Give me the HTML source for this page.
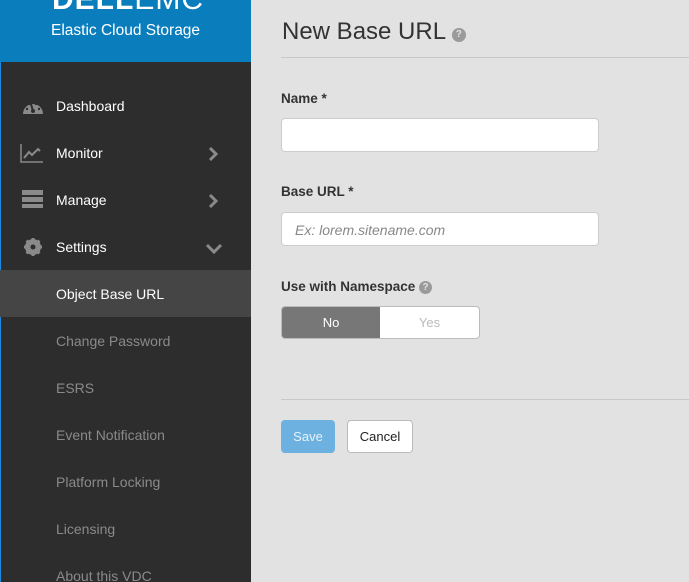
<!DOCTYPE html>
<html><head><style>
*{box-sizing:border-box;margin:0;padding:0}
html,body{width:689px;height:582px;overflow:hidden}
body{background:#e2e2e2;font-family:"Liberation Sans",Arial,sans-serif;position:relative}
#sb{position:absolute;left:0;top:0;width:251px;height:582px;background:#2d2d2d;border-left:1px solid #1e88e5}
#hd{position:absolute;left:-1px;top:0;width:251px;height:62px;background:#0a7dbd;color:#fff}
.logo{position:absolute;left:52px;top:-17px;font-size:30px;letter-spacing:1px;font-weight:bold}
.logo span{font-weight:normal}
.sub{position:absolute;left:51px;top:22px;font-size:15.5px}
.it{position:absolute;left:-1px;width:251px;height:47px;font-size:14px;line-height:47px;padding-left:56px;color:#fff}
.sub2{color:#8a8a8a}
.act{background:#454545}
.ic{position:absolute;left:22px;top:15px}
.ch{position:absolute;left:207px;top:16px}
.m{position:absolute;color:#333}
.lab{font-weight:bold;font-size:13.5px;left:281px}
.inp{position:absolute;left:281px;width:318px;height:34px;background:#fff;border:1px solid #ccc;border-radius:4px}
.q{display:inline-block;width:13px;height:13px;border-radius:50%;background:#9a9a9a;color:#e2e2e2;font-size:10px;line-height:13px;text-align:center;font-weight:bold;vertical-align:1px}
hr{position:absolute;left:281px;width:408px;border:0;border-top:1px solid #c8c8c8}
</style></head><body>
<div id="sb">
<div id="hd"><div class="logo">DELL<span>EMC</span></div><div class="sub">Elastic Cloud Storage</div></div>
<div class="it" style="top:83px"><svg class="ic" width="22" height="18" viewBox="0 0 22 18"><path d="M1 16A10 10 0 0 1 21 16Z" fill="#8a8a8a"/><circle cx="11" cy="13" r="2" fill="#2d2d2d"/><path d="M11 13L9 6" stroke="#2d2d2d" stroke-width="2"/><circle cx="5" cy="11" r="1.2" fill="#2d2d2d"/><circle cx="17" cy="11" r="1.2" fill="#2d2d2d"/><circle cx="8" cy="6" r="1.2" fill="#2d2d2d"/><circle cx="14" cy="6" r="1.2" fill="#2d2d2d"/></svg>Dashboard</div>
<div class="it" style="top:130px"><svg class="ic" width="24" height="20" viewBox="0 0 24 20" style="left:20px;top:13px"><path d="M1 1V19H23" stroke="#8a8a8a" stroke-width="1.5" fill="none"/><path d="M4 15L9 9L12 12L18 6L20 8" stroke="#8a8a8a" stroke-width="2" fill="none"/></svg>Monitor<svg class="ch" width="12" height="16"><path d="M3 2L9 8L3 14" stroke="#8a8a8a" stroke-width="3" fill="none"/></svg></div>
<div class="it" style="top:177px"><svg class="ic" width="22" height="18" style="top:13px"><rect x="0" y="0" width="21" height="5" fill="#8a8a8a"/><rect x="0" y="7" width="21" height="5" fill="#8a8a8a"/><rect x="0" y="14" width="21" height="4" fill="#8a8a8a"/></svg>Manage<svg class="ch" width="12" height="16"><path d="M3 2L9 8L3 14" stroke="#8a8a8a" stroke-width="3" fill="none"/></svg></div>
<div class="it" style="top:224px"><svg class="ic" width="20" height="20" viewBox="0 0 20 20" style="left:23px;top:13px"><circle cx="10" cy="10" r="6" fill="none" stroke="#8a8a8a" stroke-width="4"/><path d="M10 1V19M1 10H19M3.6 3.6L16.4 16.4M16.4 3.6L3.6 16.4" stroke="#8a8a8a" stroke-width="3"/><circle cx="10" cy="10" r="2.5" fill="#2d2d2d"/></svg>Settings<svg class="ch" width="18" height="12" style="left:205px;top:19px"><path d="M2 2L9 9L16 2" stroke="#8a8a8a" stroke-width="3" fill="none"/></svg></div>
<div class="it act" style="top:270px;line-height:49px">Object Base URL</div>
<div class="it sub2" style="top:318px">Change Password</div>
<div class="it sub2" style="top:365px">ESRS</div>
<div class="it sub2" style="top:412px">Event Notification</div>
<div class="it sub2" style="top:459px">Platform Locking</div>
<div class="it sub2" style="top:506px">Licensing</div>
<div class="it sub2" style="top:553px">About this VDC</div>
</div>
<div class="m" style="left:282px;top:18px;font-size:24px">New Base URL <span class="q" style="vertical-align:2px;width:14px;height:14px;line-height:14px">?</span></div>
<hr style="top:57px">
<div class="m lab" style="top:91px">Name *</div>
<div class="inp" style="top:118px"></div>
<div class="m lab" style="top:184px">Base URL *</div>
<div class="inp" style="top:212px"><span style="position:absolute;left:13px;top:9px;font-size:14px;font-style:italic;color:#888">Ex: lorem.sitename.com</span></div>
<div class="m lab" style="top:279px">Use with Namespace <span class="q">?</span></div>
<div style="position:absolute;left:281px;top:306px;width:199px;height:33px;border:1px solid #bbb;border-radius:4px;background:#fff;overflow:hidden;font-size:13px">
<div style="position:absolute;left:0;top:0;width:98px;height:31px;background:#777;color:#fff;text-align:center;line-height:31px">No</div>
<div style="position:absolute;left:98px;top:0;width:99px;height:31px;color:#bbb;text-align:center;line-height:31px">Yes</div></div>
<hr style="top:399px">
<div style="position:absolute;left:281px;top:420px;width:54px;height:33px;background:#6cb1e0;border-radius:4px;color:#e8f2fa;font-size:13px;text-align:center;line-height:33px">Save</div>
<div style="position:absolute;left:347px;top:420px;width:66px;height:33px;background:#fff;border:1px solid #bbb;border-radius:4px;color:#222;font-size:13px;text-align:center;line-height:31px">Cancel</div>
</body></html>
